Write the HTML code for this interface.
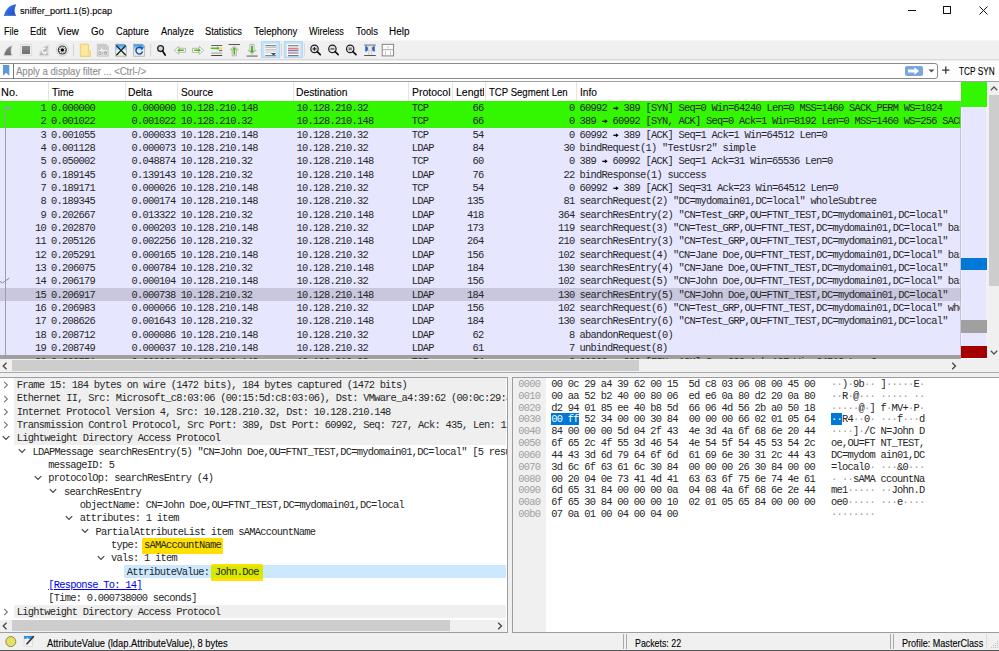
<!DOCTYPE html><html><head><meta charset="utf-8"><style>
*{margin:0;padding:0;box-sizing:border-box}
html,body{width:999px;height:651px;overflow:hidden;background:#fff}
body{position:relative;font-family:'Liberation Sans', sans-serif;color:#000}
.a{position:absolute}
.t{position:absolute;white-space:pre;line-height:1}
.s{-webkit-text-stroke:0.1px currentColor}
.m{font-family:'Liberation Mono', monospace;font-size:10.4px;letter-spacing:-0.738px;color:#262626}
.row{position:absolute;left:0;width:960px;height:13.3333px;overflow:hidden}
.pr > span{position:absolute;top:0;white-space:pre;line-height:13px}
.arw{display:inline-block;width:5.502px;height:13px;vertical-align:top;position:relative}
.arw svg{position:absolute;left:0;top:0}
.r{text-align:right}
</style></head><body>

<svg class="a" style="left:0;top:0" width="20" height="20" viewBox="0 0 20 20"><defs><linearGradient id="sg" x1="0" y1="0" x2="1" y2="1"><stop offset="0" stop-color="#3d86f0"/><stop offset="1" stop-color="#1747c0"/></linearGradient></defs><path d="M4 16 C5.5 9.5 9 5 16.2 4.2 C15.8 5.5 14.6 8 14.6 10.5 C14.6 13 15.6 14.8 16 16 Z" fill="url(#sg)"/><rect x="4.3" y="14.6" width="11.6" height="1.4" fill="#4f7fd8" opacity="0.8"/></svg>
<div class="t s" style="left:20.34px;top:5.79px;font-size:9.7px;color:#000;transform:scaleX(0.9467);transform-origin:0 0;">sniffer_port1.1(5).pcap</div>
<div class="a" style="left:908px;top:10px;width:8px;height:1px;background:#111"></div>
<div class="a" style="left:943px;top:6px;width:8px;height:8px;border:1px solid #111"></div>
<svg class="a" style="left:979px;top:6px" width="9" height="9" viewBox="0 0 9 9"><path d="M0.5 0.5L8.5 8.5M8.5 0.5L0.5 8.5" stroke="#111" stroke-width="1"/></svg>
<div class="t s" style="left:3.75px;top:26.54px;font-size:10.0px;color:#000;transform:scaleX(0.9071);transform-origin:0 0;">File</div>
<div class="t s" style="left:30.43px;top:26.54px;font-size:10.0px;color:#000;transform:scaleX(0.9368);transform-origin:0 0;">Edit</div>
<div class="t s" style="left:57.49px;top:26.54px;font-size:10.0px;color:#000;transform:scaleX(1.0196);transform-origin:0 0;">View</div>
<div class="t s" style="left:90.52px;top:26.54px;font-size:10.0px;color:#000;transform:scaleX(0.9646);transform-origin:0 0;">Go</div>
<div class="t s" style="left:115.54px;top:26.54px;font-size:10.0px;color:#000;transform:scaleX(0.9228);transform-origin:0 0;">Capture</div>
<div class="t s" style="left:160.54px;top:26.54px;font-size:10.0px;color:#000;transform:scaleX(0.9228);transform-origin:0 0;">Analyze</div>
<div class="t s" style="left:205.24px;top:26.54px;font-size:10.0px;color:#000;transform:scaleX(0.9230);transform-origin:0 0;">Statistics</div>
<div class="t s" style="left:254.13px;top:26.54px;font-size:10.0px;color:#000;transform:scaleX(0.9487);transform-origin:0 0;">Telephony</div>
<div class="t s" style="left:309.05px;top:26.54px;font-size:10.0px;color:#000;transform:scaleX(0.9055);transform-origin:0 0;">Wireless</div>
<div class="t s" style="left:355.53px;top:26.54px;font-size:10.0px;color:#000;transform:scaleX(0.9356);transform-origin:0 0;">Tools</div>
<div class="t s" style="left:389.00px;top:26.54px;font-size:10.0px;color:#000;transform:scaleX(0.9915);transform-origin:0 0;">Help</div>
<div class="a" style="left:0;top:40px;width:999px;height:1px;background:#f7f7f7"></div>
<div class="a" style="left:0;top:41px;width:999px;height:18px;background:#f0f0f0"></div>
<div class="a" style="left:0;top:59px;width:999px;height:1px;background:#d9d9d9"></div>
<div class="a" style="left:0;top:60px;width:999px;height:1px;background:#ececec"></div>
<svg class="a" style="left:0;top:40px" width="400" height="20" viewBox="0 40 400 20">
<defs>
<linearGradient id="gfin" x1="0" y1="0" x2="0" y2="1"><stop offset="0" stop-color="#8a8a8a"/><stop offset="1" stop-color="#707070"/></linearGradient>
<linearGradient id="gdoc" x1="0" y1="0" x2="0" y2="1"><stop offset="0" stop-color="#1f95e6"/><stop offset="0.55" stop-color="#e9f3fb"/><stop offset="1" stop-color="#ecebd8"/></linearGradient>
<linearGradient id="gbtn" x1="0" y1="0" x2="0" y2="1"><stop offset="0" stop-color="#d6ebfa"/><stop offset="1" stop-color="#c6e2f7"/></linearGradient>
</defs>
<!-- 1 shark fin disabled -->
<path d="M3.4 55.8 C4.6 50 7.6 46 12.6 45.2 C12.2 46.4 11.4 48.6 11.4 50.8 C11.4 53 12 54.6 12.4 55.8 Z" fill="#e9e9e9" stroke="#dedede" stroke-width="0.8"/>
<path d="M4.2 55.2 C5.3 50.3 8 46.8 11.8 46 C11.4 47.2 10.8 49 10.8 50.9 C10.8 52.8 11.3 54.2 11.6 55.2 Z" fill="url(#gfin)"/>
<!-- 2 stop -->
<rect x="20.3" y="44.4" width="11.4" height="11.4" fill="#eaeaea" stroke="#dadada" stroke-width="0.7"/>
<rect x="22" y="46" width="8" height="8" fill="url(#gfin)"/>
<!-- 3 restart fin disabled -->
<path d="M38.6 55.8 C39.8 50 42.8 46 49.4 44.8 C49 46 48.2 48.4 48.2 50.8 C48.2 53 48.8 54.6 49.2 55.8 Z" fill="#ececec" stroke="#dddddd" stroke-width="0.8"/>
<path d="M39.6 55.2 C40.8 50.5 43.5 47 48.4 45.8 C48 47 47.4 49 47.4 50.9 C47.4 52.8 47.9 54.2 48.2 55.2 Z" fill="#bcbcbc"/>
<path d="M45.4 48.6 A2.3 2.3 0 1 0 46.6 51.6" fill="none" stroke="#fbfbfb" stroke-width="1.3"/>
<path d="M43.6 52.6 L44.6 54.4 L46 52.8" fill="none" stroke="#fbfbfb" stroke-width="0.9"/>
<!-- 4 gear -->
<circle cx="62.3" cy="50" r="6.0" fill="#f7f7f7" stroke="#c4c4c4" stroke-width="0.8"/>
<circle cx="62.3" cy="50" r="4.6" fill="#3a3a3a"/>
<circle cx="62.3" cy="50" r="3.4" fill="#fafafa"/>
<circle cx="62.3" cy="50" r="3.0" fill="none" stroke="#3a3a3a" stroke-width="1.0" stroke-dasharray="1.1 1.25"/>
<circle cx="62.3" cy="50" r="1.8" fill="#000"/>
<!-- sep -->
<rect x="73" y="43.5" width="1" height="13" fill="#d5d5d5"/>
<!-- 5 folder -->
<path d="M80.3 44.2 H88.6 V51 H90.4 V56.4 H80.3 Z" fill="#f9df8a" stroke="#efc94c" stroke-width="0.7"/>
<rect x="81.3" y="45.3" width="6.4" height="10" fill="#fbe7a8"/>
<!-- 6 save disabled -->
<path d="M97.3 44.3 H106 L108.3 46.6 V56.3 H97.3 Z" fill="#c9c9c9" stroke="#bdbdbd" stroke-width="0.6"/>
<path d="M98.2 50 H100.8 L101.8 47.2 L102.8 50 H107.4 V55.4 H98.2 Z" fill="#f2f2f2"/>
<rect x="99" y="51.8" width="1.9" height="2.8" fill="none" stroke="#8f8f8f" stroke-width="0.7"/><rect x="102.4" y="51.6" width="0.8" height="3.2" fill="#8f8f8f"/><rect x="104.7" y="51.8" width="1.9" height="2.8" fill="none" stroke="#8f8f8f" stroke-width="0.7"/>
<!-- 7 close -->
<path d="M115.6 44.3 H124.6 L126.4 46.1 V56.3 H115.6 Z" fill="url(#gdoc)" stroke="#9a9a9a" stroke-width="0.6"/>
<path d="M116.4 45.6 L125.8 55.2 M125.6 45.6 L116.4 55.2" stroke="#1a1a1a" stroke-width="1.3"/>
<!-- 8 reload -->
<path d="M133.6 44.3 H142.6 L144.6 46.3 V56.3 H133.6 Z" fill="url(#gdoc)" stroke="#9a9a9a" stroke-width="0.6"/>
<path d="M141.8 48.2 A3.4 3.4 0 1 0 142.6 51.6" fill="none" stroke="#1d4fa8" stroke-width="1.5"/>
<path d="M140.2 46.6 L143.6 47.6 L141.4 50.2 Z" fill="#1d4fa8"/>
<!-- sep -->
<rect x="150.2" y="43.5" width="1" height="13" fill="#d5d5d5"/>
<!-- 9 find -->
<circle cx="160.6" cy="48.6" r="2.9" fill="#d8d8d8" stroke="#1e1e1e" stroke-width="1.3"/>
<path d="M162.6 51 L165.2 55" stroke="#111" stroke-width="1.7" stroke-linecap="round"/>
<!-- 10 back -->
<path d="M174.3 50.3 L178.8 46.4 V48.3 H185.5 V52.3 H178.8 V54.2 Z" fill="#fafafa" stroke="#9c9c9c" stroke-width="0.7"/>
<path d="M177 50.3 L179.6 48.4 V49.5 H183.8 V51.1 H179.6 V52.2 Z" fill="#4cbb12"/>
<!-- 11 forward -->
<path d="M203.7 50.3 L199.2 46.4 V48.3 H192.5 V52.3 H199.2 V54.2 Z" fill="#fafafa" stroke="#9c9c9c" stroke-width="0.7"/>
<path d="M201 50.3 L198.4 48.4 V49.5 H194.2 V51.1 H198.4 V52.2 Z" fill="#4cbb12"/>
<!-- 12 goto -->
<rect x="211.2" y="45.1" width="11" height="0.9" fill="#555"/>
<path d="M210.2 48.3 H219 L217.2 46.6 M219 48.3 L217.2 50" stroke="#9c9c9c" stroke-width="0.6" fill="none"/>
<rect x="211.2" y="47.6" width="6.5" height="1.5" fill="#4cbb12"/>
<path d="M217.5 46.6 L219.6 48.35 L217.5 50.1 Z" fill="#4cbb12"/>
<rect x="220" y="47.3" width="2.2" height="2.2" fill="#f5e31a"/>
<rect x="219" y="50.3" width="3.2" height="0.8" fill="#33336b"/>
<rect x="211.2" y="52.6" width="11" height="1" fill="#9c9c9c"/>
<rect x="211.2" y="55.1" width="11" height="0.9" fill="#333"/>
<!-- 13 first -->
<rect x="228.6" y="44.1" width="11.4" height="0.9" fill="#444"/>
<path d="M234.3 45.8 L238.2 49.8 H236.4 V55.8 H232.2 V49.8 H230.4 Z" fill="#fafafa" stroke="#9c9c9c" stroke-width="0.7"/>
<rect x="233.4" y="48.2" width="1.8" height="6.6" rx="0.9" fill="#4cbb12"/>
<path d="M231.9 49.4 L234.3 47 L236.7 49.4 Z" fill="#4cbb12"/>
<!-- 14 last -->
<path d="M252 54.4 L255.9 50.4 H254.1 V44.4 H249.9 V50.4 H248.1 Z" fill="#fafafa" stroke="#9c9c9c" stroke-width="0.7"/>
<rect x="251.1" y="45.4" width="1.8" height="6.6" rx="0.9" fill="#3fae10"/>
<path d="M249.6 50.8 L252 53.2 L254.4 50.8 Z" fill="#3fae10"/>
<rect x="246.6" y="55.6" width="11" height="0.9" fill="#444"/>
<!-- 15 autoscroll button -->
<rect x="261.7" y="41.7" width="18" height="16" fill="#c9e3f8" stroke="#a4d0f2" stroke-width="0.8"/>
<rect x="264.6" y="44" width="11.6" height="12.5" fill="#fbfbfb"/>
<rect x="265.3" y="45.3" width="10.8" height="0.9" fill="#555"/>
<rect x="265.3" y="47.2" width="10.8" height="0.7" fill="#aaa"/>
<rect x="265.3" y="48.9" width="10.8" height="0.7" fill="#aaa"/>
<rect x="265.3" y="50.6" width="10.8" height="0.7" fill="#b3ad9d"/>
<rect x="265.3" y="52.3" width="6" height="0.9" fill="#ccc"/>
<rect x="265.3" y="55.3" width="10.8" height="0.9" fill="#555"/>
<path d="M270.8 53 H276.2 L273.5 55.4 Z" fill="#1f4f9d"/>
<!-- sep -->
<rect x="281.2" y="43.5" width="0.8" height="13" fill="#cfcfcf"/>
<!-- 16 colorize button -->
<rect x="284.3" y="41.7" width="18" height="16" fill="#c9e3f8" stroke="#a4d0f2" stroke-width="0.8"/>
<rect x="287" y="44" width="12.5" height="12.5" fill="#fbfbfb"/>
<rect x="288" y="45.3" width="10.6" height="0.9" fill="#5a6460"/>
<rect x="288" y="46.9" width="10.6" height="0.6" fill="#b9b9a8"/>
<rect x="288" y="48.3" width="10.6" height="1.1" fill="#e84141"/>
<rect x="288" y="50.3" width="10.6" height="0.9" fill="#3354a3"/>
<rect x="288" y="52.2" width="10.6" height="1.6" fill="#ac9fb6"/>
<rect x="288" y="55.3" width="10.6" height="0.9" fill="#444"/>
<!-- sep -->
<rect x="304.2" y="43.5" width="0.8" height="13" fill="#d5d5d5"/>
<!-- 17 zoom in -->
<circle cx="314.5" cy="48.9" r="3.7" fill="#e2e2e2" stroke="#1e1e1e" stroke-width="1.2"/>
<path d="M312.6 48.9 H316.4 M314.5 47 V50.8" stroke="#222" stroke-width="1.1"/>
<path d="M317.2 51.7 L320.3 54.6" stroke="#111" stroke-width="1.7" stroke-linecap="round"/>
<!-- 18 zoom out -->
<circle cx="332.4" cy="48.9" r="3.7" fill="#e2e2e2" stroke="#1e1e1e" stroke-width="1.2"/>
<path d="M330.5 48.9 H334.3" stroke="#333" stroke-width="1.1"/>
<path d="M335.1 51.7 L338.2 54.6" stroke="#111" stroke-width="1.7" stroke-linecap="round"/>
<!-- 19 normal size -->
<circle cx="350.2" cy="48.9" r="3.7" fill="#e2e2e2" stroke="#1e1e1e" stroke-width="1.2"/>
<rect x="348.6" y="47.6" width="3.2" height="2.6" fill="#777"/>
<path d="M352.9 51.7 L356 54.6" stroke="#111" stroke-width="1.7" stroke-linecap="round"/>
<!-- 20 resize columns -->
<rect x="364.2" y="44.6" width="11.6" height="0.9" fill="#555"/>
<rect x="364.2" y="55" width="11.6" height="0.9" fill="#444"/>
<rect x="368.5" y="45.5" width="0.6" height="9.5" fill="#bbb"/>
<rect x="371" y="45.5" width="0.6" height="9.5" fill="#bbb"/>
<rect x="364.5" y="50" width="11" height="0.6" fill="#ccc"/>
<path d="M365.2 45.9 A2.8 2.8 0 0 1 365.2 51.5 Z" fill="#2a67c0"/>
<path d="M374.8 45.9 A2.8 2.8 0 0 0 374.8 51.5 Z" fill="#2a67c0"/>
<!-- 21 layout -->
<rect x="382.2" y="44.3" width="11.4" height="11.6" fill="#fbfbfb" stroke="#7a7a7a" stroke-width="0.9"/>
<rect x="382.6" y="49.3" width="10.8" height="0.8" fill="#999"/>
<rect x="387.7" y="46" width="0.6" height="2.5" fill="#aaa"/>
<rect x="385.1" y="51" width="0.6" height="4" fill="#aaa"/>
<rect x="390.3" y="51" width="0.6" height="4" fill="#aaa"/>
</svg>
<div class="a" style="left:0;top:61px;width:999px;height:20px;background:#fdfdfd"></div>
<div class="a" style="left:-3px;top:63px;width:940.5px;height:16px;background:#fff;border:1px solid #8a8a8a;border-radius:3px"></div>
<div class="a" style="left:13px;top:63.5px;width:1.2px;height:15px;background:#777"></div>
<svg class="a" style="left:3px;top:65px" width="7" height="11" viewBox="0 0 7 11"><path d="M0 0H6.3V10.8L3.15 7.8L0 10.8Z" fill="#5a9ad6"/></svg>
<div class="t s" style="left:16.32px;top:66.53px;font-size:10.0px;color:#8c8c8c;transform:scaleX(0.9544);transform-origin:0 0;">Apply a display filter ... &lt;Ctrl-/&gt;</div>
<div class="a" style="left:904.5px;top:65.5px;width:18px;height:10.5px;background:#7ca6da;border-radius:2px"></div>
<svg class="a" style="left:906px;top:66px" width="15" height="10" viewBox="0 0 15 10"><path d="M2 3.6H8.5V1.3L13 5L8.5 8.7V6.4H2Z" fill="#fff"/></svg>
<svg class="a" style="left:927.5px;top:68.5px" width="7" height="4" viewBox="0 0 7 4"><path d="M0.5 0.5H6.5L3.5 3.5Z" fill="#555"/></svg>
<svg class="a" style="left:941px;top:65px" width="10" height="10" viewBox="0 0 10 10"><path d="M1.2 5.2H8.4M4.8 1.6V8.8" stroke="#333" stroke-width="1.3"/></svg>
<div class="t s" style="left:958.89px;top:66.53px;font-size:10.0px;color:#000;transform:scaleX(0.8259);transform-origin:0 0;">TCP SYN</div>
<div class="a" style="left:0;top:81px;width:999px;height:1px;background:#a0a0a0"></div>
<div class="a" style="left:0;top:82px;width:960px;height:19px;background:#fff"></div>
<div class="a" style="left:48px;top:82px;width:1px;height:19px;background:#e5e5e5"></div>
<div class="a" style="left:125px;top:82px;width:1px;height:19px;background:#e5e5e5"></div>
<div class="a" style="left:177px;top:82px;width:1px;height:19px;background:#e5e5e5"></div>
<div class="a" style="left:293px;top:82px;width:1px;height:19px;background:#e5e5e5"></div>
<div class="a" style="left:408px;top:82px;width:1px;height:19px;background:#e5e5e5"></div>
<div class="a" style="left:452px;top:82px;width:1px;height:19px;background:#e5e5e5"></div>
<div class="a" style="left:485px;top:82px;width:1px;height:19px;background:#e5e5e5"></div>
<div class="a" style="left:576px;top:82px;width:1px;height:19px;background:#e5e5e5"></div>
<div class="t s" style="left:1.45px;top:88.05px;font-size:10.1px;color:#000;transform:scaleX(1.0804);transform-origin:0 0;">No.</div>
<div class="t s" style="left:51.90px;top:88.05px;font-size:10.1px;color:#000;transform:scaleX(0.9877);transform-origin:0 0;">Time</div>
<div class="t s" style="left:128.49px;top:88.05px;font-size:10.1px;color:#000;transform:scaleX(1.0146);transform-origin:0 0;">Delta</div>
<div class="t s" style="left:180.79px;top:88.05px;font-size:10.1px;color:#000;transform:scaleX(1.0034);transform-origin:0 0;">Source</div>
<div class="t s" style="left:296.49px;top:88.05px;font-size:10.1px;color:#000;transform:scaleX(1.0177);transform-origin:0 0;">Destination</div>
<div class="t s" style="left:412.07px;top:88.05px;font-size:10.1px;color:#000;transform:scaleX(1.0403);transform-origin:0 0;">Protocol</div>
<div class="t s" style="left:489.12px;top:88.05px;font-size:10.1px;color:#000;transform:scaleX(0.9488);transform-origin:0 0;">TCP Segment Len</div>
<div class="t s" style="left:580.09px;top:88.05px;font-size:10.1px;color:#000;transform:scaleX(1.0102);transform-origin:0 0;">Info</div>
<div class="a" style="left:452px;top:82px;width:31.5px;height:19px;overflow:hidden">
<div class="t s" style="left:3.67px;top:6.05px;font-size:10.1px;color:#000;transform:scaleX(1.0439);transform-origin:0 0;">Length</div>
</div>
<div class="a" style="left:0;top:101px;width:961px;height:258px;overflow:hidden;background:#e7e6ff">
<div class="a" style="left:0;top:0.000px;width:961px;height:13.3333px;background:#33f700"></div>
<div class="a" style="left:0;top:13.333px;width:961px;height:13.3333px;background:#33f700"></div>
<div class="a" style="left:0;top:26.667px;width:961px;height:13.3333px;background:#e7e6ff"></div>
<div class="a" style="left:0;top:40.000px;width:961px;height:13.3333px;background:#e7e6ff"></div>
<div class="a" style="left:0;top:53.333px;width:961px;height:13.3333px;background:#e7e6ff"></div>
<div class="a" style="left:0;top:66.666px;width:961px;height:13.3333px;background:#e7e6ff"></div>
<div class="a" style="left:0;top:80.000px;width:961px;height:13.3333px;background:#e7e6ff"></div>
<div class="a" style="left:0;top:93.333px;width:961px;height:13.3333px;background:#e7e6ff"></div>
<div class="a" style="left:0;top:106.666px;width:961px;height:13.3333px;background:#e7e6ff"></div>
<div class="a" style="left:0;top:120.000px;width:961px;height:13.3333px;background:#e7e6ff"></div>
<div class="a" style="left:0;top:133.333px;width:961px;height:13.3333px;background:#e7e6ff"></div>
<div class="a" style="left:0;top:146.666px;width:961px;height:13.3333px;background:#e7e6ff"></div>
<div class="a" style="left:0;top:160.000px;width:961px;height:13.3333px;background:#e7e6ff"></div>
<div class="a" style="left:0;top:173.333px;width:961px;height:13.3333px;background:#e7e6ff"></div>
<div class="a" style="left:0;top:186.666px;width:961px;height:13.3333px;background:#c8c7de"></div>
<div class="a" style="left:0;top:199.999px;width:961px;height:13.3333px;background:#e7e6ff"></div>
<div class="a" style="left:0;top:213.333px;width:961px;height:13.3333px;background:#e7e6ff"></div>
<div class="a" style="left:0;top:226.666px;width:961px;height:13.3333px;background:#e7e6ff"></div>
<div class="a" style="left:0;top:239.999px;width:961px;height:13.3333px;background:#e7e6ff"></div>
<div class="a" style="left:0;top:254.000px;width:961px;height:13.3333px;background:#a0a0a0"></div>
<div class="a m pr" style="left:0;top:1px;width:960px;height:13px;overflow:hidden">
<span class="r" style="right:913.9px">1</span>
<span style="left:51.1px">0.000000</span>
<span class="r" style="right:784.5px">0.000000</span>
<span style="left:180.8px">10.128.210.148</span>
<span style="left:296.6px">10.128.210.32</span>
<span style="left:411.8px">TCP</span>
<span class="r" style="right:476.4px">66</span>
<span class="r" style="right:385.4px">0</span>
<span style="left:579.5px">60992 <span class="arw"><svg width="6" height="13" viewBox="0 0 6 13"><path d="M0.3 6.3H3.6" stroke="#000" stroke-width="1.25"/><path d="M2.9 4.3L5.7 6.3L2.9 8.3Z" fill="#000"/></svg></span> 389 [SYN] Seq=0 Win=64240 Len=0 MSS=1460 SACK_PERM WS=1024</span>
</div>
<div class="a m pr" style="left:0;top:14px;width:960px;height:13px;overflow:hidden">
<span class="r" style="right:913.9px">2</span>
<span style="left:51.1px">0.001022</span>
<span class="r" style="right:784.5px">0.001022</span>
<span style="left:180.8px">10.128.210.32</span>
<span style="left:296.6px">10.128.210.148</span>
<span style="left:411.8px">TCP</span>
<span class="r" style="right:476.4px">66</span>
<span class="r" style="right:385.4px">0</span>
<span style="left:579.5px">389 <span class="arw"><svg width="6" height="13" viewBox="0 0 6 13"><path d="M0.3 6.3H3.6" stroke="#000" stroke-width="1.25"/><path d="M2.9 4.3L5.7 6.3L2.9 8.3Z" fill="#000"/></svg></span> 60992 [SYN, ACK] Seq=0 Ack=1 Win=8192 Len=0 MSS=1460 WS=256 SACK_PERM</span>
</div>
<div class="a m pr" style="left:0;top:28px;width:960px;height:13px;overflow:hidden">
<span class="r" style="right:913.9px">3</span>
<span style="left:51.1px">0.001055</span>
<span class="r" style="right:784.5px">0.000033</span>
<span style="left:180.8px">10.128.210.148</span>
<span style="left:296.6px">10.128.210.32</span>
<span style="left:411.8px">TCP</span>
<span class="r" style="right:476.4px">54</span>
<span class="r" style="right:385.4px">0</span>
<span style="left:579.5px">60992 <span class="arw"><svg width="6" height="13" viewBox="0 0 6 13"><path d="M0.3 6.3H3.6" stroke="#000" stroke-width="1.25"/><path d="M2.9 4.3L5.7 6.3L2.9 8.3Z" fill="#000"/></svg></span> 389 [ACK] Seq=1 Ack=1 Win=64512 Len=0</span>
</div>
<div class="a m pr" style="left:0;top:41px;width:960px;height:13px;overflow:hidden">
<span class="r" style="right:913.9px">4</span>
<span style="left:51.1px">0.001128</span>
<span class="r" style="right:784.5px">0.000073</span>
<span style="left:180.8px">10.128.210.148</span>
<span style="left:296.6px">10.128.210.32</span>
<span style="left:411.8px">LDAP</span>
<span class="r" style="right:476.4px">84</span>
<span class="r" style="right:385.4px">30</span>
<span style="left:579.5px">bindRequest(1) "TestUsr2" simple</span>
</div>
<div class="a m pr" style="left:0;top:54px;width:960px;height:13px;overflow:hidden">
<span class="r" style="right:913.9px">5</span>
<span style="left:51.1px">0.050002</span>
<span class="r" style="right:784.5px">0.048874</span>
<span style="left:180.8px">10.128.210.32</span>
<span style="left:296.6px">10.128.210.148</span>
<span style="left:411.8px">TCP</span>
<span class="r" style="right:476.4px">60</span>
<span class="r" style="right:385.4px">0</span>
<span style="left:579.5px">389 <span class="arw"><svg width="6" height="13" viewBox="0 0 6 13"><path d="M0.3 6.3H3.6" stroke="#000" stroke-width="1.25"/><path d="M2.9 4.3L5.7 6.3L2.9 8.3Z" fill="#000"/></svg></span> 60992 [ACK] Seq=1 Ack=31 Win=65536 Len=0</span>
</div>
<div class="a m pr" style="left:0;top:68px;width:960px;height:13px;overflow:hidden">
<span class="r" style="right:913.9px">6</span>
<span style="left:51.1px">0.189145</span>
<span class="r" style="right:784.5px">0.139143</span>
<span style="left:180.8px">10.128.210.32</span>
<span style="left:296.6px">10.128.210.148</span>
<span style="left:411.8px">LDAP</span>
<span class="r" style="right:476.4px">76</span>
<span class="r" style="right:385.4px">22</span>
<span style="left:579.5px">bindResponse(1) success</span>
</div>
<div class="a m pr" style="left:0;top:81px;width:960px;height:13px;overflow:hidden">
<span class="r" style="right:913.9px">7</span>
<span style="left:51.1px">0.189171</span>
<span class="r" style="right:784.5px">0.000026</span>
<span style="left:180.8px">10.128.210.148</span>
<span style="left:296.6px">10.128.210.32</span>
<span style="left:411.8px">TCP</span>
<span class="r" style="right:476.4px">54</span>
<span class="r" style="right:385.4px">0</span>
<span style="left:579.5px">60992 <span class="arw"><svg width="6" height="13" viewBox="0 0 6 13"><path d="M0.3 6.3H3.6" stroke="#000" stroke-width="1.25"/><path d="M2.9 4.3L5.7 6.3L2.9 8.3Z" fill="#000"/></svg></span> 389 [ACK] Seq=31 Ack=23 Win=64512 Len=0</span>
</div>
<div class="a m pr" style="left:0;top:94px;width:960px;height:13px;overflow:hidden">
<span class="r" style="right:913.9px">8</span>
<span style="left:51.1px">0.189345</span>
<span class="r" style="right:784.5px">0.000174</span>
<span style="left:180.8px">10.128.210.148</span>
<span style="left:296.6px">10.128.210.32</span>
<span style="left:411.8px">LDAP</span>
<span class="r" style="right:476.4px">135</span>
<span class="r" style="right:385.4px">81</span>
<span style="left:579.5px">searchRequest(2) "DC=mydomain01,DC=local" wholeSubtree</span>
</div>
<div class="a m pr" style="left:0;top:108px;width:960px;height:13px;overflow:hidden">
<span class="r" style="right:913.9px">9</span>
<span style="left:51.1px">0.202667</span>
<span class="r" style="right:784.5px">0.013322</span>
<span style="left:180.8px">10.128.210.32</span>
<span style="left:296.6px">10.128.210.148</span>
<span style="left:411.8px">LDAP</span>
<span class="r" style="right:476.4px">418</span>
<span class="r" style="right:385.4px">364</span>
<span style="left:579.5px">searchResEntry(2) "CN=Test_GRP,OU=FTNT_TEST,DC=mydomain01,DC=local"</span>
</div>
<div class="a m pr" style="left:0;top:121px;width:960px;height:13px;overflow:hidden">
<span class="r" style="right:913.9px">10</span>
<span style="left:51.1px">0.202870</span>
<span class="r" style="right:784.5px">0.000203</span>
<span style="left:180.8px">10.128.210.148</span>
<span style="left:296.6px">10.128.210.32</span>
<span style="left:411.8px">LDAP</span>
<span class="r" style="right:476.4px">173</span>
<span class="r" style="right:385.4px">119</span>
<span style="left:579.5px">searchRequest(3) "CN=Test_GRP,OU=FTNT_TEST,DC=mydomain01,DC=local" baseObject</span>
</div>
<div class="a m pr" style="left:0;top:134px;width:960px;height:13px;overflow:hidden">
<span class="r" style="right:913.9px">11</span>
<span style="left:51.1px">0.205126</span>
<span class="r" style="right:784.5px">0.002256</span>
<span style="left:180.8px">10.128.210.32</span>
<span style="left:296.6px">10.128.210.148</span>
<span style="left:411.8px">LDAP</span>
<span class="r" style="right:476.4px">264</span>
<span class="r" style="right:385.4px">210</span>
<span style="left:579.5px">searchResEntry(3) "CN=Test_GRP,OU=FTNT_TEST,DC=mydomain01,DC=local"</span>
</div>
<div class="a m pr" style="left:0;top:148px;width:960px;height:13px;overflow:hidden">
<span class="r" style="right:913.9px">12</span>
<span style="left:51.1px">0.205291</span>
<span class="r" style="right:784.5px">0.000165</span>
<span style="left:180.8px">10.128.210.148</span>
<span style="left:296.6px">10.128.210.32</span>
<span style="left:411.8px">LDAP</span>
<span class="r" style="right:476.4px">156</span>
<span class="r" style="right:385.4px">102</span>
<span style="left:579.5px">searchRequest(4) "CN=Jane Doe,OU=FTNT_TEST,DC=mydomain01,DC=local" baseObject</span>
</div>
<div class="a m pr" style="left:0;top:161px;width:960px;height:13px;overflow:hidden">
<span class="r" style="right:913.9px">13</span>
<span style="left:51.1px">0.206075</span>
<span class="r" style="right:784.5px">0.000784</span>
<span style="left:180.8px">10.128.210.32</span>
<span style="left:296.6px">10.128.210.148</span>
<span style="left:411.8px">LDAP</span>
<span class="r" style="right:476.4px">184</span>
<span class="r" style="right:385.4px">130</span>
<span style="left:579.5px">searchResEntry(4) "CN=Jane Doe,OU=FTNT_TEST,DC=mydomain01,DC=local"</span>
</div>
<div class="a m pr" style="left:0;top:174px;width:960px;height:13px;overflow:hidden">
<span class="r" style="right:913.9px">14</span>
<span style="left:51.1px">0.206179</span>
<span class="r" style="right:784.5px">0.000104</span>
<span style="left:180.8px">10.128.210.148</span>
<span style="left:296.6px">10.128.210.32</span>
<span style="left:411.8px">LDAP</span>
<span class="r" style="right:476.4px">156</span>
<span class="r" style="right:385.4px">102</span>
<span style="left:579.5px">searchRequest(5) "CN=John Doe,OU=FTNT_TEST,DC=mydomain01,DC=local" baseObject</span>
</div>
<div class="a m pr" style="left:0;top:188px;width:960px;height:13px;overflow:hidden">
<span class="r" style="right:913.9px">15</span>
<span style="left:51.1px">0.206917</span>
<span class="r" style="right:784.5px">0.000738</span>
<span style="left:180.8px">10.128.210.32</span>
<span style="left:296.6px">10.128.210.148</span>
<span style="left:411.8px">LDAP</span>
<span class="r" style="right:476.4px">184</span>
<span class="r" style="right:385.4px">130</span>
<span style="left:579.5px">searchResEntry(5) "CN=John Doe,OU=FTNT_TEST,DC=mydomain01,DC=local"</span>
</div>
<div class="a m pr" style="left:0;top:201px;width:960px;height:13px;overflow:hidden">
<span class="r" style="right:913.9px">16</span>
<span style="left:51.1px">0.206983</span>
<span class="r" style="right:784.5px">0.000066</span>
<span style="left:180.8px">10.128.210.148</span>
<span style="left:296.6px">10.128.210.32</span>
<span style="left:411.8px">LDAP</span>
<span class="r" style="right:476.4px">156</span>
<span class="r" style="right:385.4px">102</span>
<span style="left:579.5px">searchRequest(6) "CN=Test_GRP,OU=FTNT_TEST,DC=mydomain01,DC=local" wholeSubtree</span>
</div>
<div class="a m pr" style="left:0;top:214px;width:960px;height:13px;overflow:hidden">
<span class="r" style="right:913.9px">17</span>
<span style="left:51.1px">0.208626</span>
<span class="r" style="right:784.5px">0.001643</span>
<span style="left:180.8px">10.128.210.32</span>
<span style="left:296.6px">10.128.210.148</span>
<span style="left:411.8px">LDAP</span>
<span class="r" style="right:476.4px">184</span>
<span class="r" style="right:385.4px">130</span>
<span style="left:579.5px">searchResEntry(6) "CN=Test_GRP,OU=FTNT_TEST,DC=mydomain01,DC=local"</span>
</div>
<div class="a m pr" style="left:0;top:228px;width:960px;height:13px;overflow:hidden">
<span class="r" style="right:913.9px">18</span>
<span style="left:51.1px">0.208712</span>
<span class="r" style="right:784.5px">0.000086</span>
<span style="left:180.8px">10.128.210.148</span>
<span style="left:296.6px">10.128.210.32</span>
<span style="left:411.8px">LDAP</span>
<span class="r" style="right:476.4px">62</span>
<span class="r" style="right:385.4px">8</span>
<span style="left:579.5px">abandonRequest(0)</span>
</div>
<div class="a m pr" style="left:0;top:241px;width:960px;height:13px;overflow:hidden">
<span class="r" style="right:913.9px">19</span>
<span style="left:51.1px">0.208749</span>
<span class="r" style="right:784.5px">0.000037</span>
<span style="left:180.8px">10.128.210.148</span>
<span style="left:296.6px">10.128.210.32</span>
<span style="left:411.8px">LDAP</span>
<span class="r" style="right:476.4px">61</span>
<span class="r" style="right:385.4px">7</span>
<span style="left:579.5px">unbindRequest(8)</span>
</div>
<div class="a m pr" style="left:0;top:255px;width:960px;height:13px;overflow:hidden">
<span class="r" style="right:913.9px">20</span>
<span style="left:51.1px">0.208751</span>
<span class="r" style="right:784.5px">0.000002</span>
<span style="left:180.8px">10.128.210.148</span>
<span style="left:296.6px">10.128.210.32</span>
<span style="left:411.8px">TCP</span>
<span class="r" style="right:476.4px">54</span>
<span class="r" style="right:385.4px">0</span>
<span style="left:579.5px">60992 <span class="arw"><svg width="6" height="13" viewBox="0 0 6 13"><path d="M0.3 6.3H3.6" stroke="#000" stroke-width="1.25"/><path d="M2.9 4.3L5.7 6.3L2.9 8.3Z" fill="#000"/></svg></span> 389 [FIN, ACK] Seq=290 Ack=197 Win=64512 Len=0</span>
</div>
<div class="a" style="left:4.6px;top:7px;width:1.4px;height:260px;background:#9a9ea6"></div>
<div class="a" style="left:4.6px;top:6.4px;width:6.5px;height:1.4px;background:#9a9ea6"></div>
<svg class="a" style="left:0;top:176px" width="11" height="8" viewBox="0 0 11 8"><path d="M0 4.5L2.5 6L9.5 1" stroke="#8a8e96" stroke-width="1" fill="none"/></svg>
</div>
<div class="a" style="left:960px;top:101px;width:1px;height:258px;background:#a8a8b8;opacity:0.55"></div>
<div class="a" style="left:961px;top:82px;width:26px;height:276px;background:#e7e6ff;border-left:1px solid #f4eefc;border-right:1px solid #f4eefc"></div>
<div class="a" style="left:961px;top:82px;width:26px;height:25px;background:#33f700"></div>
<div class="a" style="left:961px;top:257.5px;width:26px;height:12.5px;background:#0078d7"></div>
<div class="a" style="left:961px;top:320px;width:26px;height:13px;background:#a0a0a0"></div>
<div class="a" style="left:961px;top:345.5px;width:26px;height:12.5px;background:#a40000"></div>
<div class="a" style="left:987px;top:82px;width:12px;height:277px;background:#f0f0f0"></div>
<div class="a" style="left:988.5px;top:95px;width:10.5px;height:191px;background:#cdcdcd"></div>
<svg class="a" style="left:990px;top:85.5px" width="8" height="5" viewBox="0 0 8 5"><path d="M0.8 4.2L4 1L7.2 4.2" stroke="#555" stroke-width="1.3" fill="none"/></svg>
<svg class="a" style="left:990px;top:349.5px" width="8" height="5" viewBox="0 0 8 5"><path d="M0.8 0.8L4 4L7.2 0.8" stroke="#555" stroke-width="1.3" fill="none"/></svg>
<div class="a" style="left:0;top:359px;width:999px;height:13px;background:#f0f0f0"></div>
<div class="a" style="left:12px;top:360px;width:627px;height:11px;background:#cdcdcd"></div>
<svg class="a" style="left:2px;top:362px" width="6" height="8" viewBox="0 0 6 8"><path d="M4.5 0.8L1.2 4L4.5 7.2" stroke="#444" stroke-width="1.3" fill="none"/></svg>
<svg class="a" style="left:951px;top:361.5px" width="6" height="8" viewBox="0 0 6 8"><path d="M1.2 0.8L4.5 4L1.2 7.2" stroke="#444" stroke-width="1.3" fill="none"/></svg>
<div class="a" style="left:0;top:372px;width:999px;height:1px;background:#a9abb0"></div>
<div class="a" style="left:0;top:373px;width:999px;height:4px;background:#f0f0f0"></div>
<div class="a" style="left:0;top:377px;width:508px;height:256px;border:1px solid #9a9da3;border-left:none;background:#fff"></div>
<div class="a" style="left:508px;top:373px;width:4px;height:260px;background:#f0f0f0"></div>
<div class="a" style="left:0;top:378px;width:507px;height:242px;overflow:hidden">
<div class="a" style="left:14px;top:0.000px;width:492px;height:13.3333px;background:#efefef"></div>
<svg class="a" style="left:3.0px;top:3.200px" width="6" height="8" viewBox="0 0 6 8"><path d="M1.2 0.8L4.4 4L1.2 7.2" stroke="#777" stroke-width="1.1" fill="none"/></svg>
<div class="t m" style="left:16.8px;top:1px;line-height:13px">Frame 15: 184 bytes on wire (1472 bits), 184 bytes captured (1472 bits)</div>
<div class="a" style="left:14px;top:13.333px;width:492px;height:13.3333px;background:#efefef"></div>
<svg class="a" style="left:3.0px;top:16.533px" width="6" height="8" viewBox="0 0 6 8"><path d="M1.2 0.8L4.4 4L1.2 7.2" stroke="#777" stroke-width="1.1" fill="none"/></svg>
<div class="t m" style="left:16.8px;top:14px;line-height:13px">Ethernet II, Src: Microsoft_c8:03:06 (00:15:5d:c8:03:06), Dst: VMware_a4:39:62 (00:0c:29:a4:39:62)</div>
<div class="a" style="left:14px;top:26.667px;width:492px;height:13.3333px;background:#efefef"></div>
<svg class="a" style="left:3.0px;top:29.867px" width="6" height="8" viewBox="0 0 6 8"><path d="M1.2 0.8L4.4 4L1.2 7.2" stroke="#777" stroke-width="1.1" fill="none"/></svg>
<div class="t m" style="left:16.8px;top:28px;line-height:13px">Internet Protocol Version 4, Src: 10.128.210.32, Dst: 10.128.210.148</div>
<div class="a" style="left:14px;top:40.000px;width:492px;height:13.3333px;background:#efefef"></div>
<svg class="a" style="left:3.0px;top:43.200px" width="6" height="8" viewBox="0 0 6 8"><path d="M1.2 0.8L4.4 4L1.2 7.2" stroke="#777" stroke-width="1.1" fill="none"/></svg>
<div class="t m" style="left:16.8px;top:41px;line-height:13px">Transmission Control Protocol, Src Port: 389, Dst Port: 60992, Seq: 727, Ack: 435, Len: 130</div>
<div class="a" style="left:14px;top:53.333px;width:492px;height:13.3333px;background:#efefef"></div>
<svg class="a" style="left:2.3000000000000007px;top:56.933px" width="8" height="6" viewBox="0 0 8 6"><path d="M0.8 1.2L4 4.4L7.2 1.2" stroke="#444" stroke-width="1.2" fill="none"/></svg>
<div class="t m" style="left:16.8px;top:54px;line-height:13px">Lightweight Directory Access Protocol</div>
<svg class="a" style="left:18.020000000000003px;top:70.266px" width="8" height="6" viewBox="0 0 8 6"><path d="M0.8 1.2L4 4.4L7.2 1.2" stroke="#444" stroke-width="1.2" fill="none"/></svg>
<div class="t m" style="left:32.52px;top:68px;line-height:13px">LDAPMessage searchResEntry(5) "CN=John Doe,OU=FTNT_TEST,DC=mydomain01,DC=local" [5 results]</div>
<div class="t m" style="left:48.24px;top:81px;line-height:13px">messageID: 5</div>
<svg class="a" style="left:33.74px;top:96.933px" width="8" height="6" viewBox="0 0 8 6"><path d="M0.8 1.2L4 4.4L7.2 1.2" stroke="#444" stroke-width="1.2" fill="none"/></svg>
<div class="t m" style="left:48.24px;top:94px;line-height:13px">protocolOp: searchResEntry (4)</div>
<svg class="a" style="left:49.46000000000001px;top:110.266px" width="8" height="6" viewBox="0 0 8 6"><path d="M0.8 1.2L4 4.4L7.2 1.2" stroke="#444" stroke-width="1.2" fill="none"/></svg>
<div class="t m" style="left:63.96000000000001px;top:108px;line-height:13px">searchResEntry</div>
<div class="t m" style="left:79.68px;top:121px;line-height:13px">objectName: CN=John Doe,OU=FTNT_TEST,DC=mydomain01,DC=local</div>
<svg class="a" style="left:65.18px;top:136.933px" width="8" height="6" viewBox="0 0 8 6"><path d="M0.8 1.2L4 4.4L7.2 1.2" stroke="#444" stroke-width="1.2" fill="none"/></svg>
<div class="t m" style="left:79.68px;top:134px;line-height:13px">attributes: 1 item</div>
<svg class="a" style="left:80.9px;top:150.266px" width="8" height="6" viewBox="0 0 8 6"><path d="M0.8 1.2L4 4.4L7.2 1.2" stroke="#444" stroke-width="1.2" fill="none"/></svg>
<div class="t m" style="left:95.4px;top:148px;line-height:13px">PartialAttributeList item sAMAccountName</div>
<div class="a" style="left:142px;top:159.500px;width:80.5px;height:16.5px;background:#ffe000;border-radius:1px"></div>
<div class="t m" style="left:111.12px;top:161px;line-height:13px">type: sAMAccountName</div>
<svg class="a" style="left:96.62px;top:176.933px" width="8" height="6" viewBox="0 0 8 6"><path d="M0.8 1.2L4 4.4L7.2 1.2" stroke="#444" stroke-width="1.2" fill="none"/></svg>
<div class="t m" style="left:111.12px;top:174px;line-height:13px">vals: 1 item</div>
<div class="a" style="left:124px;top:186.666px;width:382px;height:13.3333px;background:#cce8ff"></div>
<div class="a" style="left:211px;top:186.366px;width:52px;height:17px;background:#ffe000;border-radius:1px"></div>
<div class="a" style="left:211px;top:187.666px;width:52px;height:12.5px;background:#d6e800"></div>
<div class="t m" style="left:126.84px;top:188px;line-height:13px">AttributeValue: John.Doe</div>
<div class="t m" style="left:48.24px;top:201px;line-height:13px;color:#0000ee;text-decoration:underline">[Response To: 14]</div>
<div class="t m" style="left:48.24px;top:214px;line-height:13px">[Time: 0.000738000 seconds]</div>
<div class="a" style="left:14px;top:226.666px;width:492px;height:13.3333px;background:#efefef"></div>
<svg class="a" style="left:3.0px;top:229.866px" width="6" height="8" viewBox="0 0 6 8"><path d="M1.2 0.8L4.4 4L1.2 7.2" stroke="#777" stroke-width="1.1" fill="none"/></svg>
<div class="t m" style="left:16.8px;top:228px;line-height:13px">Lightweight Directory Access Protocol</div>
</div>
<div class="a" style="left:0;top:620px;width:506px;height:12px;background:#f0f0f0"></div>
<div class="a" style="left:12px;top:620px;width:438px;height:11px;background:#cdcdcd"></div>
<svg class="a" style="left:2px;top:622px" width="6" height="8" viewBox="0 0 6 8"><path d="M4.5 0.8L1.2 4L4.5 7.2" stroke="#444" stroke-width="1.3" fill="none"/></svg>
<svg class="a" style="left:497px;top:622px" width="6" height="8" viewBox="0 0 6 8"><path d="M1.2 0.8L4.5 4L1.2 7.2" stroke="#444" stroke-width="1.3" fill="none"/></svg>
<div class="a" style="left:512px;top:377px;width:487px;height:256px;border:1px solid #9a9da3;border-right:none;background:#fff"></div>
<div class="a" style="left:513px;top:378px;width:33px;height:254px;background:#f0f0f0"></div>
<div class="t m" style="left:518.3px;top:378px;line-height:13px;color:#a0a0a0">0000</div>
<div class="t m" style="left:551.2px;top:378px;line-height:13px">00 0c 29 a4 39 62 00 15  5d c8 03 06 08 00 45 00</div>
<div class="t m" style="left:831px;top:378px;line-height:13px"><span style="color:#9c9c9c">·</span><span style="color:#9c9c9c">·</span>)<span style="color:#9c9c9c">·</span>9b<span style="color:#9c9c9c">·</span><span style="color:#9c9c9c">·</span> ]<span style="color:#9c9c9c">·</span><span style="color:#9c9c9c">·</span><span style="color:#9c9c9c">·</span><span style="color:#9c9c9c">·</span><span style="color:#9c9c9c">·</span>E<span style="color:#9c9c9c">·</span></div>
<div class="t m" style="left:518.3px;top:390px;line-height:13px;color:#a0a0a0">0010</div>
<div class="t m" style="left:551.2px;top:390px;line-height:13px">00 aa 52 b2 40 00 80 06  ed e6 0a 80 d2 20 0a 80</div>
<div class="t m" style="left:831px;top:390px;line-height:13px"><span style="color:#9c9c9c">·</span><span style="color:#9c9c9c">·</span>R<span style="color:#9c9c9c">·</span>@<span style="color:#9c9c9c">·</span><span style="color:#9c9c9c">·</span><span style="color:#9c9c9c">·</span> <span style="color:#9c9c9c">·</span><span style="color:#9c9c9c">·</span><span style="color:#9c9c9c">·</span><span style="color:#9c9c9c">·</span><span style="color:#9c9c9c">·</span> <span style="color:#9c9c9c">·</span><span style="color:#9c9c9c">·</span></div>
<div class="t m" style="left:518.3px;top:402px;line-height:13px;color:#a0a0a0">0020</div>
<div class="t m" style="left:551.2px;top:402px;line-height:13px">d2 94 01 85 ee 40 b8 5d  66 06 4d 56 2b a0 50 18</div>
<div class="t m" style="left:831px;top:402px;line-height:13px"><span style="color:#9c9c9c">·</span><span style="color:#9c9c9c">·</span><span style="color:#9c9c9c">·</span><span style="color:#9c9c9c">·</span><span style="color:#9c9c9c">·</span>@<span style="color:#9c9c9c">·</span>] f<span style="color:#9c9c9c">·</span>MV+<span style="color:#9c9c9c">·</span>P<span style="color:#9c9c9c">·</span></div>
<div class="t m" style="left:518.3px;top:413px;line-height:13px;color:#a0a0a0">0030</div>
<div class="a" style="left:551px;top:413px;width:28px;height:12px;background:#0078d7"></div>
<div class="a" style="left:831px;top:413px;width:11px;height:12px;background:#0078d7"></div>
<div class="t m" style="left:551.2px;top:413px;line-height:13px"><span style="color:#fff">00 ff</span> 52 34 00 00 30 84  00 00 00 66 02 01 05 64</div>
<div class="t m" style="left:831px;top:413px;line-height:13px"><span style="color:#fff">··</span>R4<span style="color:#9c9c9c">·</span><span style="color:#9c9c9c">·</span>0<span style="color:#9c9c9c">·</span> <span style="color:#9c9c9c">·</span><span style="color:#9c9c9c">·</span><span style="color:#9c9c9c">·</span>f<span style="color:#9c9c9c">·</span><span style="color:#9c9c9c">·</span><span style="color:#9c9c9c">·</span>d</div>
<div class="t m" style="left:518.3px;top:425px;line-height:13px;color:#a0a0a0">0040</div>
<div class="t m" style="left:551.2px;top:425px;line-height:13px">84 00 00 00 5d 04 2f 43  4e 3d 4a 6f 68 6e 20 44</div>
<div class="t m" style="left:831px;top:425px;line-height:13px"><span style="color:#9c9c9c">·</span><span style="color:#9c9c9c">·</span><span style="color:#9c9c9c">·</span><span style="color:#9c9c9c">·</span>]<span style="color:#9c9c9c">·</span>/C N=John D</div>
<div class="t m" style="left:518.3px;top:437px;line-height:13px;color:#a0a0a0">0050</div>
<div class="t m" style="left:551.2px;top:437px;line-height:13px">6f 65 2c 4f 55 3d 46 54  4e 54 5f 54 45 53 54 2c</div>
<div class="t m" style="left:831px;top:437px;line-height:13px">oe,OU=FT NT_TEST,</div>
<div class="t m" style="left:518.3px;top:449px;line-height:13px;color:#a0a0a0">0060</div>
<div class="t m" style="left:551.2px;top:449px;line-height:13px">44 43 3d 6d 79 64 6f 6d  61 69 6e 30 31 2c 44 43</div>
<div class="t m" style="left:831px;top:449px;line-height:13px">DC=mydom ain01,DC</div>
<div class="t m" style="left:518.3px;top:461px;line-height:13px;color:#a0a0a0">0070</div>
<div class="t m" style="left:551.2px;top:461px;line-height:13px">3d 6c 6f 63 61 6c 30 84  00 00 00 26 30 84 00 00</div>
<div class="t m" style="left:831px;top:461px;line-height:13px">=local0<span style="color:#9c9c9c">·</span> <span style="color:#9c9c9c">·</span><span style="color:#9c9c9c">·</span><span style="color:#9c9c9c">·</span>&amp;0<span style="color:#9c9c9c">·</span><span style="color:#9c9c9c">·</span><span style="color:#9c9c9c">·</span></div>
<div class="t m" style="left:518.3px;top:473px;line-height:13px;color:#a0a0a0">0080</div>
<div class="t m" style="left:551.2px;top:473px;line-height:13px">00 20 04 0e 73 41 4d 41  63 63 6f 75 6e 74 4e 61</div>
<div class="t m" style="left:831px;top:473px;line-height:13px"><span style="color:#9c9c9c">·</span> <span style="color:#9c9c9c">·</span><span style="color:#9c9c9c">·</span>sAMA ccountNa</div>
<div class="t m" style="left:518.3px;top:484px;line-height:13px;color:#a0a0a0">0090</div>
<div class="t m" style="left:551.2px;top:484px;line-height:13px">6d 65 31 84 00 00 00 0a  04 08 4a 6f 68 6e 2e 44</div>
<div class="t m" style="left:831px;top:484px;line-height:13px">me1<span style="color:#9c9c9c">·</span><span style="color:#9c9c9c">·</span><span style="color:#9c9c9c">·</span><span style="color:#9c9c9c">·</span><span style="color:#9c9c9c">·</span> <span style="color:#9c9c9c">·</span><span style="color:#9c9c9c">·</span>John.D</div>
<div class="t m" style="left:518.3px;top:496px;line-height:13px;color:#a0a0a0">00a0</div>
<div class="t m" style="left:551.2px;top:496px;line-height:13px">6f 65 30 84 00 00 00 10  02 01 05 65 84 00 00 00</div>
<div class="t m" style="left:831px;top:496px;line-height:13px">oe0<span style="color:#9c9c9c">·</span><span style="color:#9c9c9c">·</span><span style="color:#9c9c9c">·</span><span style="color:#9c9c9c">·</span><span style="color:#9c9c9c">·</span> <span style="color:#9c9c9c">·</span><span style="color:#9c9c9c">·</span><span style="color:#9c9c9c">·</span>e<span style="color:#9c9c9c">·</span><span style="color:#9c9c9c">·</span><span style="color:#9c9c9c">·</span><span style="color:#9c9c9c">·</span></div>
<div class="t m" style="left:518.3px;top:508px;line-height:13px;color:#a0a0a0">00b0</div>
<div class="t m" style="left:551.2px;top:508px;line-height:13px">07 0a 01 00 04 00 04 00</div>
<div class="t m" style="left:831px;top:508px;line-height:13px"><span style="color:#9c9c9c">·</span><span style="color:#9c9c9c">·</span><span style="color:#9c9c9c">·</span><span style="color:#9c9c9c">·</span><span style="color:#9c9c9c">·</span><span style="color:#9c9c9c">·</span><span style="color:#9c9c9c">·</span><span style="color:#9c9c9c">·</span></div>
<div class="a" style="left:0;top:633px;width:999px;height:17px;background:#f0f0f0"></div>
<div class="a" style="left:0;top:650px;width:999px;height:1px;background:#555"></div>
<svg class="a" style="left:5px;top:636px" width="12" height="12" viewBox="0 0 12 12"><circle cx="5.8" cy="5.6" r="5" fill="#e4e06a" stroke="#85823a" stroke-width="0.9"/></svg>
<svg class="a" style="left:23px;top:635px" width="12" height="13" viewBox="0 0 12 13"><rect x="1" y="1" width="8.6" height="10.6" fill="#f2f2ee" stroke="#d2d2cc" stroke-width="0.6"/><rect x="1" y="1" width="8.6" height="2.8" fill="#2b95e0"/><path d="M3.2 3.8 L4.4 2.4 L5.6 3.8 Z" fill="#e8f2fb"/><path d="M4 8.8 L10.4 1.6" stroke="#3a3a3a" stroke-width="1.7" stroke-linecap="round"/></svg>
<div class="t s" style="left:47.13px;top:639.45px;font-size:10.1px;color:#000;transform:scaleX(0.9269);transform-origin:0 0;">AttributeValue (ldap.AttributeValue), 8 bytes</div>
<div class="a" style="left:623px;top:634px;width:1px;height:15px;background:#a9a9a9"></div>
<div class="a" style="left:626px;top:634px;width:1px;height:15px;background:#a9a9a9"></div>
<div class="a" style="left:890px;top:634px;width:1px;height:15px;background:#a9a9a9"></div>
<div class="a" style="left:893px;top:634px;width:1px;height:15px;background:#a9a9a9"></div>
<svg class="a" style="left:990px;top:640px" width="9" height="10" viewBox="0 0 9 10"><g fill="#bdbdbd"><rect x="7" y="1" width="1" height="1"/><rect x="5" y="3" width="1" height="1"/><rect x="7" y="3" width="1" height="1"/><rect x="3" y="5" width="1" height="1"/><rect x="5" y="5" width="1" height="1"/><rect x="7" y="5" width="1" height="1"/><rect x="1" y="7" width="1" height="1"/><rect x="3" y="7" width="1" height="1"/><rect x="5" y="7" width="1" height="1"/><rect x="7" y="7" width="1" height="1"/></g></svg>
<div class="a" style="left:986px;top:634px;width:1px;height:15px;background:#dcdcdc"></div>
<div class="t s" style="left:634.96px;top:639.45px;font-size:10.1px;color:#000;transform:scaleX(0.8734);transform-origin:0 0;">Packets: 22</div>
<div class="t s" style="left:901.95px;top:639.45px;font-size:10.1px;color:#000;transform:scaleX(0.8988);transform-origin:0 0;">Profile: MasterClass</div>
</body></html>
